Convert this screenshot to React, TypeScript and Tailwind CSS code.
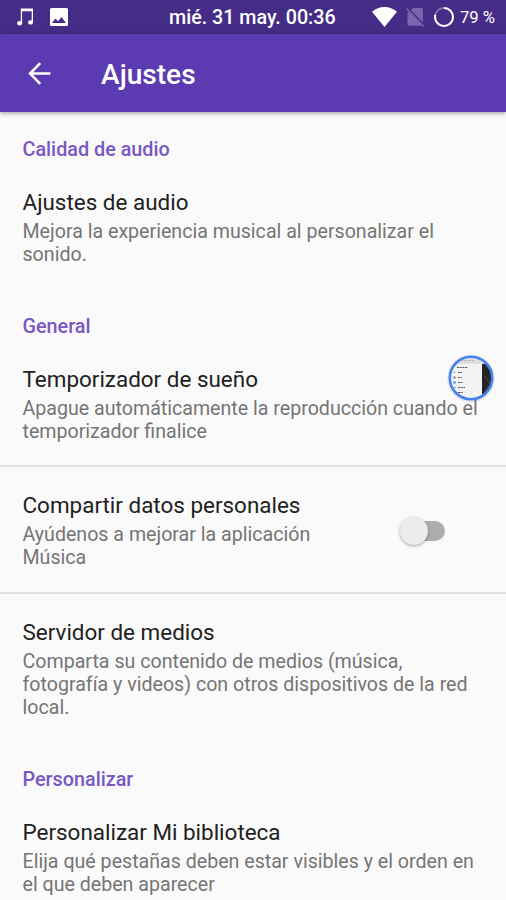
import { FC, ReactNode } from 'react';

// ---------------------------------------------------------------------------
// Status bar
// ---------------------------------------------------------------------------

const StatusBar: FC = () => (
  <div className="relative flex h-[34px] shrink-0 items-center bg-[#452d87] text-white">
    <svg className="ml-[17px] h-[18px] w-4 shrink-0" viewBox="0 0 16 18" fill="currentColor">
      <path d="M3.8 0.5H16V14H14.7V3.2H5.1V15H3.8Z" />
      <ellipse cx="2.6" cy="15.3" rx="2.5" ry="2.2" />
      <ellipse cx="13.5" cy="14.4" rx="2.5" ry="2.2" />
    </svg>
    <svg className="ml-[17px] h-[18px] w-[18px] shrink-0" viewBox="0 0 18 18">
      <path fill="currentColor" fillRule="evenodd" d="M1.5 0H16.5Q18 0 18 1.5V16.5Q18 18 16.5 18H1.5Q0 18 0 16.5V1.5Q0 0 1.5 0ZM2 15H16L11.5 9L8 13.2L5.5 10.4Z" />
    </svg>
    <span className="ml-[101px] whitespace-nowrap pt-0.5 text-[19.7px] font-medium">mié. 31 may. 00:36</span>
    <svg className="ml-auto h-5 w-[25px] shrink-0" viewBox="0 0 25 20" fill="currentColor">
      <path d="M12.5 20L0 4.8C3.5 1.7 8 0 12.5 0S21.5 1.7 25 4.8Z" />
    </svg>
    <svg className="ml-[9px] h-[19px] w-[18px] shrink-0" viewBox="0 0 18 19" fill="#7966ac">
      <path d="M7 0H15.5Q17 0 17 1.5V14.8L4.2 2.8Z" />
      <path d="M0 1.1L1.1 0L18 17.8L17 19L15.8 17.8H3Q1.5 17.8 1.5 16.3V5.3L2.7 4.1Z" />
      <path d="M3.4 2L17.4 15.6" stroke="#452d87" strokeWidth="1.2" />
    </svg>
    <svg className="ml-[10px] h-5 w-5 shrink-0" viewBox="0 0 20 20" fill="none" strokeWidth="2">
      <circle cx="10" cy="10" r="9" stroke="#8070ae" />
      <circle cx="10" cy="10" r="9" stroke="white" pathLength="100" strokeDasharray="79 21" transform="rotate(-90 10 10)" />
    </svg>
    <span className="ml-[6px] mr-[11px] whitespace-nowrap pt-0.5 text-[16.7px]">79 %</span>
  </div>
);

// ---------------------------------------------------------------------------
// Toolbar
// ---------------------------------------------------------------------------

const Toolbar: FC = () => (
  <header className="relative z-10 flex h-[78px] shrink-0 items-center bg-[#5c3ab2] text-white shadow-[0_1px_5px_rgba(0,0,0,0.4)]">
    <button className="ml-[28px]" aria-label="Atrás">
      <svg className="h-[23px] w-[23px]" viewBox="0 0 23 23" fill="none" stroke="currentColor" strokeWidth="2.5">
        <path d="M22.5 11.5H2.5M12.2 1.2L2 11.5L12.2 21.8" />
      </svg>
    </button>
    <h1 className="ml-[50px] pt-1 text-[28.1px] font-medium leading-none">Ajustes</h1>
  </header>
);

// ---------------------------------------------------------------------------
// Preference list
// ---------------------------------------------------------------------------

const SectionHeader: FC<{ children: ReactNode }> = ({ children }) => (
  <h2 className="h-[50.5px] pl-[22.5px] pt-[25px] text-[19.8px] font-medium leading-[23px] text-[#7857c3]">{children}</h2>
);

interface PreferenceProps {
  title: string;
  lines: string[];
  divider?: boolean;
  widget?: ReactNode;
}

const Preference: FC<PreferenceProps> = ({ title, lines, divider, widget }) => (
  <div
    className={`flex items-center justify-between pb-[24.5px] pl-[22.5px] pt-[25px] ${
      divider ? 'border-b-2 border-[#e1e1e1]' : ''
    }`}
  >
    <div className={divider ? '-mb-0.5' : ''}>
      <h3 className="whitespace-nowrap text-[22.45px] leading-[26px] text-[#212121]">{title}</h3>
      <p className="mt-[5px] text-[19.62px] leading-[23px] text-[#757575]">
        {lines.map(line => (
          <span key={line} className="block whitespace-nowrap">{line}</span>
        ))}
      </p>
    </div>
    {widget}
  </div>
);

const Switch: FC = () => (
  <button role="switch" aria-checked="false" className="relative mr-[61px] mt-[3px] flex h-7 w-[45px] shrink-0 items-center justify-end">
    <span className="h-5 w-9 rounded-full bg-[#adadad]" />
    <span className="absolute left-0 top-0 h-7 w-7 rounded-full bg-[#ececec] shadow-[0_1px_3px_rgba(0,0,0,0.35)]" />
  </button>
);

// Round floating thumbnail that hovers over the list
const FloatingBubble: FC = () => (
  <svg className="absolute left-[445px] top-[352px] z-20 h-[52px] w-[52px]" viewBox="0 0 52 52">
    <defs>
      <clipPath id="bubble">
        <circle cx="26" cy="26" r="21" />
      </clipPath>
    </defs>
    <circle cx="26" cy="26.5" r="24" fill="#000" opacity="0.07" />
    <g clipPath="url(#bubble)">
      <rect width="52" height="52" fill="#f3f3f3" />
      <rect width="52" height="12" fill="#dedede" />
      <rect x="37" y="12" width="15" height="40" fill="#242424" />
      <path d="M39 23L45 32L39 41M41 14L45 18" stroke="#4c4c4c" strokeWidth="1" fill="none" />
      <g stroke="#555" strokeWidth="1.2" strokeDasharray="2 0.7">
        <path d="M16 8.5H29" opacity="0.25" />
        <path d="M12 15.5H23" />
        <path d="M13 20.5H17" />
        <path d="M13 25.5H17" />
        <path d="M13 30.5H18" />
        <path d="M13 35.5H20" />
        <path d="M13 40.5H18" />
      </g>
      <g fill="#888">
        <circle cx="9.5" cy="20.5" r="0.8" />
        <circle cx="9.5" cy="25.5" r="1.2" />
        <circle cx="9.5" cy="30.5" r="1.2" fill="#4b82ec" />
        <circle cx="10" cy="35.5" r="0.8" />
      </g>
    </g>
    <circle cx="26" cy="26" r="21.2" fill="none" stroke="#4381ed" strokeWidth="2.6" />
  </svg>
);

export default function App() {
  return (
    <div className="relative flex h-[900px] w-[506px] flex-col overflow-hidden bg-[#fafafa] font-['Roboto',sans-serif]">
      <StatusBar />
      <Toolbar />
      <main className="min-h-0 flex-1 overflow-hidden pt-px">
        <SectionHeader>Calidad de audio</SectionHeader>
        <Preference
          title="Ajustes de audio"
          lines={['Mejora la experiencia musical al personalizar el', 'sonido.']}
        />
        <SectionHeader>General</SectionHeader>
        <Preference
          title="Temporizador de sueño"
          lines={['Apague automáticamente la reproducción cuando el', 'temporizador finalice']}
          divider
        />
        <Preference
          title="Compartir datos personales"
          lines={['Ayúdenos a mejorar la aplicación', 'Música']}
          divider
          widget={<Switch />}
        />
        <Preference
          title="Servidor de medios"
          lines={['Comparta su contenido de medios (música,', 'fotografía y videos) con otros dispositivos de la red', 'local.']}
        />
        <SectionHeader>Personalizar</SectionHeader>
        <Preference
          title="Personalizar Mi biblioteca"
          lines={['Elija qué pestañas deben estar visibles y el orden en', 'el que deben aparecer']}
        />
      </main>
      <FloatingBubble />
    </div>
  );
}
